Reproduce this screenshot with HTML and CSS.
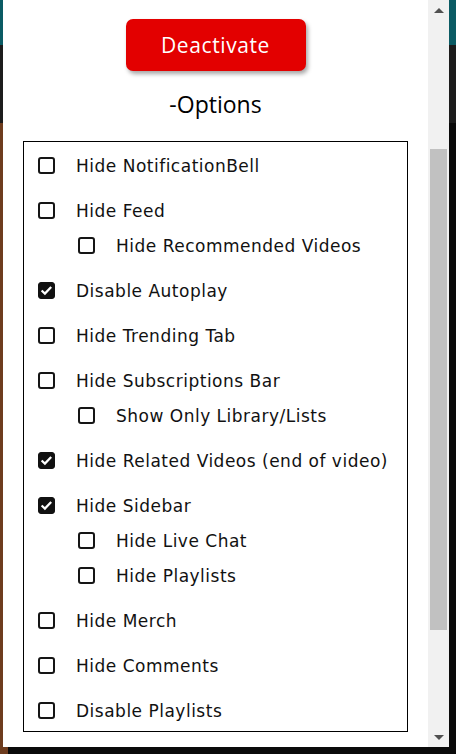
FILE: index.html
```html
<!DOCTYPE html>
<html>
<head>
<meta charset="utf-8">
<link rel="stylesheet" href="styles.css">
</head>
<body>
<div class="page">
  <div class="popup">
    <div class="content">
      <button class="deactivate">Deactivate</button>
      <div class="heading">-Options</div>
      <div class="options">
        <div class="opt top"><span class="cb"></span><span>Hide NotificationBell</span></div>
        <div class="opt top"><span class="cb"></span><span>Hide Feed</span></div>
        <div class="opt sub"><span class="cb"></span><span>Hide Recommended Videos</span></div>
        <div class="opt top"><span class="cb on"><svg viewBox="0 0 16 16"><path d="M2.8 8 L6.3 11.3 L13 4.3" fill="none" stroke="#fff" stroke-width="2.4"/></svg></span><span>Disable Autoplay</span></div>
        <div class="opt top"><span class="cb"></span><span>Hide Trending Tab</span></div>
        <div class="opt top"><span class="cb"></span><span>Hide Subscriptions Bar</span></div>
        <div class="opt sub"><span class="cb"></span><span>Show Only Library/Lists</span></div>
        <div class="opt top"><span class="cb on"><svg viewBox="0 0 16 16"><path d="M2.8 8 L6.3 11.3 L13 4.3" fill="none" stroke="#fff" stroke-width="2.4"/></svg></span><span>Hide Related Videos (end of video)</span></div>
        <div class="opt top"><span class="cb on"><svg viewBox="0 0 16 16"><path d="M2.8 8 L6.3 11.3 L13 4.3" fill="none" stroke="#fff" stroke-width="2.4"/></svg></span><span>Hide Sidebar</span></div>
        <div class="opt sub"><span class="cb"></span><span>Hide Live Chat</span></div>
        <div class="opt sub"><span class="cb"></span><span>Hide Playlists</span></div>
        <div class="opt top"><span class="cb"></span><span>Hide Merch</span></div>
        <div class="opt top"><span class="cb"></span><span>Hide Comments</span></div>
        <div class="opt top"><span class="cb"></span><span>Disable Playlists</span></div>
      </div>
    </div>
    <div class="scrollbar">
      <div class="arrow up"></div>
      <div class="track"><div class="thumb"></div></div>
      <div class="arrow down"></div>
    </div>
  </div>
</div>
</body>
</html>
```
FILE: styles.css
```css
html, body {
  margin: 0;
  padding: 0;
}
body {
  width: 456px;
  height: 754px;
  overflow: hidden;
  background:
    linear-gradient(to bottom, #0b5b64 0, #0b5b64 45px, #1c1c1c 45px, #1c1c1c 123px, transparent 123px),
    linear-gradient(to right, #6e3c1e 0, #6e3c1e 8px, #0a0a0a 8px);
  font-family: "DejaVu Sans", sans-serif;
}
.page {
  padding-left: 3px;
}
.popup {
  width: 446px;
  height: 747px;
  display: flex;
  background: #fff;
}
.content {
  width: 425px;
  overflow: hidden;
  display: flex;
  flex-direction: column;
  align-items: center;
  padding-top: 19px;
}
.deactivate {
  width: 180px;
  height: 52px;
  border: none;
  border-radius: 7px;
  background: #e30000;
  color: #fff;
  font-family: "Open Sans", sans-serif;
  font-size: 21px;
  letter-spacing: 0.6px;
  box-shadow: 2px 3px 4px rgba(0, 0, 0, 0.35);
  padding: 0;
}
.heading {
  margin-top: 18px;
  font-family: "Open Sans", sans-serif;
  font-size: 23px;
  line-height: 30px;
  color: #000;
}
.options {
  align-self: stretch;
  margin: 22px 20px 0 20px;
  border: 1px solid #000;
  padding: 6px 0 3px 0;
}
.opt {
  height: 35px;
  display: flex;
  align-items: center;
  font-size: 17px;
  letter-spacing: 0.5px;
  color: #111;
}
.opt.top {
  padding-left: 14px;
}
.opt.top + .opt.top,
.opt.sub + .opt.top {
  margin-top: 10px;
}
.opt.sub {
  padding-left: 54px;
}
.cb {
  width: 17px;
  height: 17px;
  box-sizing: border-box;
  border: 2px solid #151515;
  border-radius: 3px;
  margin-right: 21px;
  flex: none;
  display: flex;
}
.cb.on {
  background: #111;
  border-color: #111;
  border-width: 1px;
}
.cb svg {
  width: 15px;
  height: 15px;
}
.scrollbar {
  width: 21px;
  background: #f1f1f1;
  display: flex;
  flex-direction: column;
}
.arrow {
  height: 20px;
  display: flex;
  align-items: center;
  justify-content: center;
}
.arrow.up::before {
  content: "";
  border-left: 5px solid transparent;
  border-right: 5px solid transparent;
  border-bottom: 5px solid #505050;
}
.arrow.down::before {
  content: "";
  border-left: 5px solid transparent;
  border-right: 5px solid transparent;
  border-top: 5px solid #505050;
}
.track {
  flex: 1;
  padding: 129px 2px 97px 2px;
  display: flex;
}
.thumb {
  flex: 1;
  background: #c1c1c1;
}
```
